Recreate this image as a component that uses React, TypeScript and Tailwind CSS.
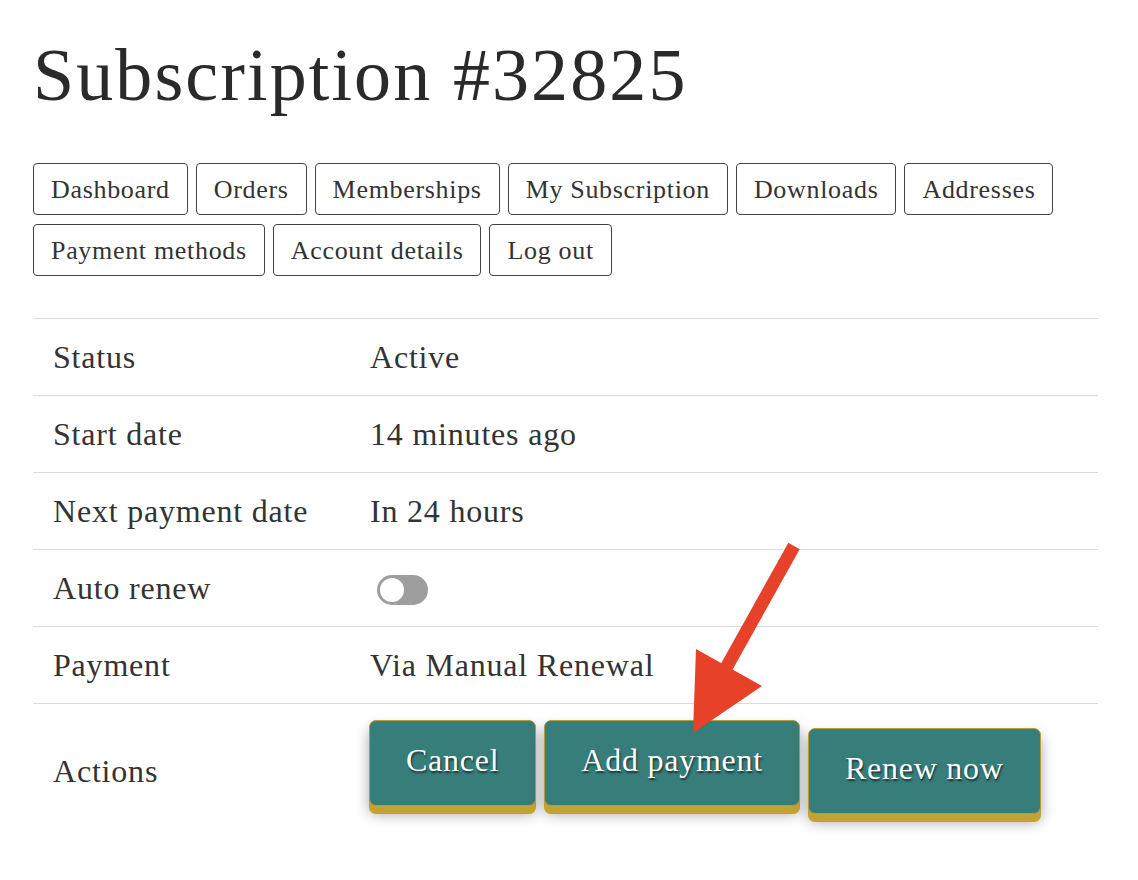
import React from "react";

const navItems = [
    "Dashboard",
    "Orders",
    "Memberships",
    "My Subscription",
    "Downloads",
    "Addresses",
    "Payment methods",
    "Account details",
    "Log out",
];

const Toggle: React.FC = () => (
    <div className="ml-[7px] mt-[3px] w-[51px] h-[30px] rounded-full bg-[#9e9e9e] flex items-center px-[3px]">
        <div className="w-6 h-6 rounded-full bg-white" />
    </div>
);

const ActionButton: React.FC<{ label: string; className?: string }> = ({ label, className }) => (
    <button
        className={
            "h-[86px] px-[36px] pb-[7px] rounded-[7px] bg-[#377d7a] border border-[#b89b3a] text-white text-[32px] tracking-[0.75px] " +
            "shadow-[0_8px_0_#c3a234,0_8px_14px_rgba(0,0,0,0.35)] [text-shadow:1px_2px_2px_rgba(0,0,0,0.6)] " +
            (className ?? "")
        }
    >
        {label}
    </button>
);

const rows: { label: string; value: React.ReactNode }[] = [
    { label: "Status", value: "Active" },
    { label: "Start date", value: "14 minutes ago" },
    { label: "Next payment date", value: "In 24 hours" },
    { label: "Auto renew", value: <Toggle /> },
    { label: "Payment", value: "Via Manual Renewal" },
];

export default function App() {
    return (
        <div className="relative w-[1138px] h-[880px] bg-white font-['Liberation_Serif','Times_New_Roman',serif] text-[#333]">
            <div className="pl-[33px] pr-[40px] pt-[38px]">
                <h1 className="text-[74px] leading-none tracking-[2.1px] text-[#2a2a2a]">Subscription #32825</h1>

                {/* Account navigation */}
                <nav className="mt-[51px] flex flex-wrap gap-x-2 gap-y-[9px]">
                    {navItems.map((item) => (
                        <a
                            key={item}
                            className="h-[52px] px-[17px] flex items-center border border-[#444] rounded-[4px] text-[26px] tracking-[0.68px] text-[#333]"
                        >
                            {item}
                        </a>
                    ))}
                </nav>

                {/* Subscription details */}
                <div className="mt-[42px] border-t border-[#dcdcdc] text-[32px] tracking-[0.8px]">
                    {rows.map((row) => (
                        <div key={row.label} className="grid grid-cols-[337px_1fr] h-[77px] items-center border-b border-[#dcdcdc]">
                            <div className="pl-5">{row.label}</div>
                            <div>{row.value}</div>
                        </div>
                    ))}
                    <div className="grid grid-cols-[336px_1fr] items-center pt-4 pb-5">
                        <div className="pl-5 pt-2">Actions</div>
                        <div className="flex items-start gap-x-[8px]">
                            <ActionButton label="Cancel" />
                            <ActionButton label="Add payment" />
                            <ActionButton label="Renew now" className="mt-2" />
                        </div>
                    </div>
                </div>
            </div>

            {/* Annotation arrow */}
            <svg className="absolute left-0 top-0 pointer-events-none" width="1138" height="880" viewBox="0 0 1138 880">
                <line x1="794" y1="546" x2="726" y2="668" stroke="#e8412a" strokeWidth="13" />
                <polygon points="696,649 762,686 693,733" fill="#e8412a" />
            </svg>
        </div>
    );
}
